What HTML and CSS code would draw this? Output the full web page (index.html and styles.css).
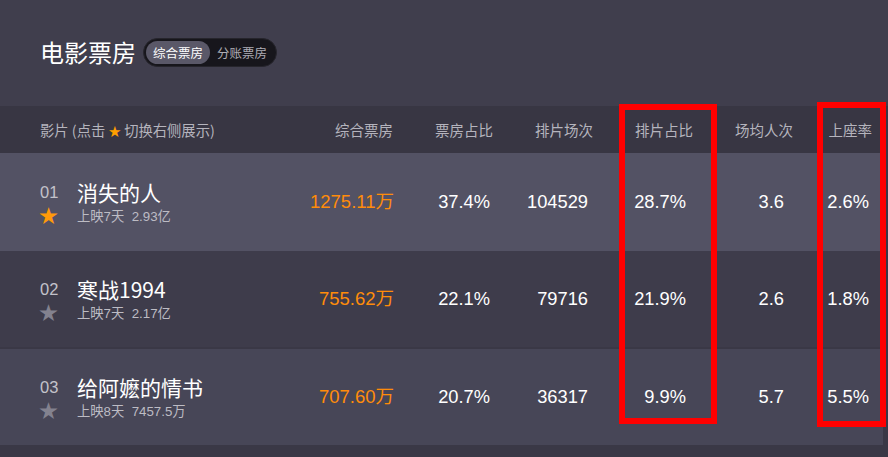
FILE: index.html
```html
<!DOCTYPE html>
<html lang="zh">
<head>
<meta charset="utf-8">
<link rel="stylesheet" href="styles.css">
</head>
<body>
<div class="page">
  <div class="top">
    <h1 class="title">电影票房</h1>
    <div class="toggle">
      <span class="tab active">综合票房</span>
      <span class="tab">分账票房</span>
    </div>
  </div>
  <div class="table">
    <div class="row head">
      <div class="c film">影片 (点击 <span class="hstar">★</span> 切换右侧展示)</div>
      <div class="c n1">综合票房</div>
      <div class="c n2">票房占比</div>
      <div class="c n3">排片场次</div>
      <div class="c n4">排片占比</div>
      <div class="c n5">场均人次</div>
      <div class="c n6">上座率</div>
    </div>
    <div class="row body r1">
      <div class="c film">
        <div class="info">
          <span class="rank">01</span><span class="name">消失的人</span>
          <span class="star on">★</span><span class="sub">上映7天&nbsp; 2.93亿</span>
        </div>
      </div>
      <div class="c n1 box">1275.11万</div>
      <div class="c n2">37.4%</div>
      <div class="c n3">104529</div>
      <div class="c n4">28.7%</div>
      <div class="c n5">3.6</div>
      <div class="c n6">2.6%</div>
    </div>
    <div class="row body r2">
      <div class="c film">
        <div class="info">
          <span class="rank">02</span><span class="name">寒战1994</span>
          <span class="star">★</span><span class="sub">上映7天&nbsp; 2.17亿</span>
        </div>
      </div>
      <div class="c n1 box">755.62万</div>
      <div class="c n2">22.1%</div>
      <div class="c n3">79716</div>
      <div class="c n4">21.9%</div>
      <div class="c n5">2.6</div>
      <div class="c n6">1.8%</div>
    </div>
    <div class="row body r3">
      <div class="c film">
        <div class="info">
          <span class="rank">03</span><span class="name">给阿嬷的情书</span>
          <span class="star">★</span><span class="sub">上映8天&nbsp; 7457.5万</span>
        </div>
      </div>
      <div class="c n1 box">707.60万</div>
      <div class="c n2">20.7%</div>
      <div class="c n3">36317</div>
      <div class="c n4">9.9%</div>
      <div class="c n5">5.7</div>
      <div class="c n6">5.5%</div>
    </div>
  </div>
  <div class="mark mark1"></div>
  <div class="mark mark2"></div>
</div>
</body>
</html>
```
FILE: styles.css
```css
* { box-sizing: border-box; margin: 0; padding: 0; }
html, body { width: 888px; height: 457px; overflow: hidden; }
body {
  background: #3a3846;
  font-family: "Liberation Sans", "Noto Sans CJK SC", sans-serif;
  color: #fff;
}
.page { position: relative; width: 888px; height: 457px; }
.top {
  height: 106px;
  background: #403e4d;
  display: flex;
  align-items: center;
  padding: 0 0 2px 40px;
  gap: 7px;
}
.title {
  font-family: "Noto Sans CJK SC", sans-serif;
  font-weight: 400;
  font-size: 24px;
  line-height: 30px;
  color: #fff;
}
.toggle {
  display: flex;
  align-items: center;
  height: 29px;
  padding: 0 2px;
  border-radius: 15px;
  background: #17161c;
  border: 1px solid #26252c;
}
.tab {
  font-family: "Noto Sans CJK SC", sans-serif;
  font-size: 12.5px;
  line-height: 23px;
  height: 23px;
  padding: 0 7px 0 6px;
  border-radius: 12px;
  color: #aeadb5;
}
.tab.active { background: #5a5868; color: #fff; padding: 0 7px; margin-right: 1px; }
.table { width: 883px; }
.row {
  display: grid;
  grid-template-columns: 293px 100px 100px 100px 100px 100px 90px;
  align-items: center;
}
.head {
  height: 47px;
  background: #383643;
  font-family: "Noto Sans CJK SC", sans-serif;
  font-size: 14.5px;
  color: #b5b4bd;
}
.head .c { text-align: right; padding-bottom: 1px; }
.head .film { text-align: left; padding-left: 40px; font-size: 14.3px; }
.head .n6 { padding-right: 11px; }
.hstar { color: #ff9f00; font-size: 12.5px; }
.body { height: 98px; font-size: 18.3px; }
.r1 { background: #535264; }
.r2 { background: #3e3c4b; height: 96px; }
.r3 { background: #474657; height: 96px; margin-top: 2px; }
.body .c { text-align: right; color: #fff; }
.body .n1 { color: #ff8c0a; margin-right: -1px; margin-top: -4px; font-size: 18.5px; }
.body .n2 { padding-right: 3px; }
.body .n3 { padding-right: 5px; }
.body .n4 { padding-right: 7px; }
.body .n5 { padding-right: 9px; }
.body .n6 { padding-right: 14px; }
.body .film { padding-left: 40px; }
.info {
  display: grid;
  grid-template-columns: 37px auto;
  align-items: center;
  text-align: left;
  margin-top: 3px;
}
.rank { font-size: 16.5px; line-height: 24px; color: #c3c2ca; }
.name { font-family: "Noto Sans CJK SC", sans-serif; font-size: 21px; line-height: 24px; color: #fff; }
.star { font-size: 19px; line-height: 20px; color: #83828f; margin-left: -1px; margin-top: 3px; }
.star.on { color: #ff9a0a; }
.sub { font-size: 13.3px; line-height: 20px; color: #bdbcc4; margin-top: 3px; }
.mark { position: absolute; border: 6px solid #ff0000; }
.mark1 { left: 619px; top: 104px; width: 98px; height: 320px; }
.mark2 { left: 817px; top: 102px; width: 69px; height: 325px; }
```
